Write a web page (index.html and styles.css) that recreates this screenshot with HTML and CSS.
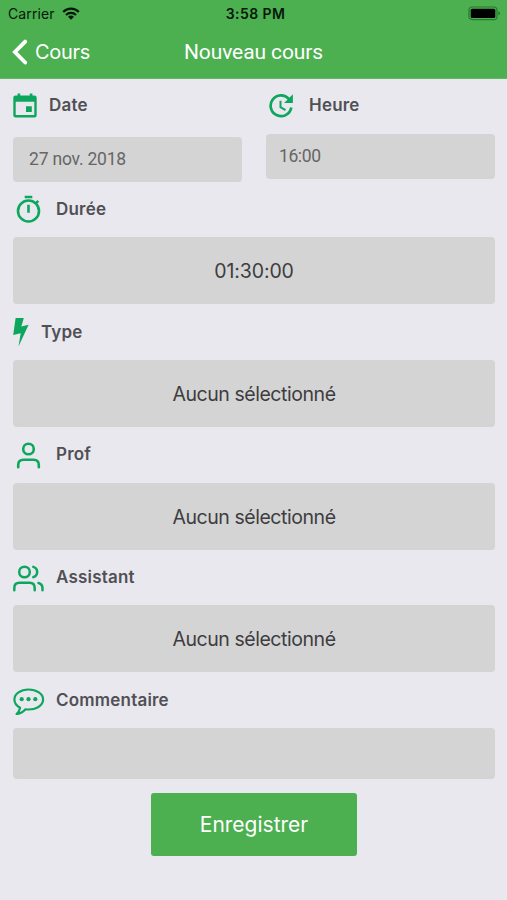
FILE: index.html
```html
<!DOCTYPE html>
<html lang="fr">
<head>
<meta charset="utf-8">
<title>Nouveau cours</title>
<link rel="stylesheet" href="styles.css">
</head>
<body>
<header class="header">
  <div class="status">
    <div class="carrier"><span>Carrier</span>
      <svg width="18" height="13" viewBox="0 0 18 13" fill="none" stroke="#06180a" stroke-width="2.2"><path d="M1.2 5C5.5.6 12.5.6 16.8 5M4 8c2.8-2.8 7.2-2.8 10 0"/><path d="M9 12.7 6 9.8c1.7-1.6 4.3-1.6 6 0z" fill="#06180a" stroke="none"/></svg>
    </div>
    <span class="time">3:58 PM</span>
    <svg class="battery" width="33" height="15" viewBox="0 0 33 15"><rect x="1" y="1" width="28" height="12.6" rx="3.2" fill="none" stroke="#267b2c" stroke-width="1.2"/><rect x="2.7" y="2.7" width="24.6" height="9.2" rx="1.5" fill="#000"/><path d="M30.4 5.3q1.6.5 1.6 2t-1.6 2z" fill="#267b2c"/></svg>
  </div>
  <nav class="nav">
    <div class="back">
      <svg width="17" height="28" viewBox="0 0 17 28" fill="none" stroke="#fff" stroke-width="3.9" stroke-linecap="round" stroke-linejoin="miter"><path d="M13.2 3.600 2.900 14l10.300 10.500"/></svg>
      <span>Cours</span>
    </div>
    <h1 class="title">Nouveau cours</h1>
    <span></span>
  </nav>
</header>
<main class="form">
  <div class="pair">
    <section class="half">
      <div class="label label-date">
        <svg width="24" height="25" viewBox="0 -0.500 24 25"><path fill="#0ca75d" fill-rule="evenodd" d="M2.600 2h2V0h2.600v2h9.600V0h2.600v2h2q2.300 0 2.300 2.300v17.400q0 2.300-2.300 2.300H2.600Q.3 24 .3 21.700V4.300Q.3 2 2.600 2M2.700 8.300v13.300h18.600V8.300zM13 12.700h5.800v5.800H13z"/></svg>
        <span>Date</span>
      </div>
      <div class="input input-date">27 nov. 2018</div>
    </section>
    <section class="half">
      <div class="label label-time">
        <svg width="26" height="26" viewBox="1 -0.500 26 26" fill="none" stroke="#0ca75d" stroke-width="2.700"><path d="M20.800 5.300A10.400 10.400 0 1 0 23.300 14"/><path d="M24.900 .8v8.800h-8.800z" fill="#0ca75d" stroke="none"/><path d="M12.500 7.200v6.400l5 3.100" stroke-width="2"/></svg>
        <span>Heure</span>
      </div>
      <div class="input input-time">16:00</div>
    </section>
  </div>

  <section class="group">
    <div class="label">
      <svg class="icon-wide" width="32" height="30" viewBox="0 0 32 30" fill="none" stroke="#0ca75d" stroke-width="2.600"><circle cx="15.500" cy="17" r="10.500"/><path d="M11.700 3h7.600M15.500 10.700v8M22.800 9.300l2.500-2.500"/></svg>
      <span>Durée</span>
    </div>
    <div class="field duration">01:30:00</div>
  </section>
  <section class="group">
    <div class="label label-type">
      <svg width="17" height="30" viewBox="0 -1 17 30"><path fill="#0ca75d" d="M2.600 0h8.200L8.300 8.500l7.300-1.800L5.500 28.500l2.200-13.200L.2 16.900z"/></svg>
      <span>Type</span>
    </div>
    <div class="field">Aucun sélectionné</div>
  </section>
  <section class="group">
    <div class="label">
      <svg class="icon-wide" width="32" height="30" viewBox="0 -1 32 30" fill="none" stroke="#0ca75d" stroke-width="2.600" stroke-linecap="round"><circle cx="15.500" cy="8" r="5.300"/><path d="M5.200 26.300V24q0-5.200 5.200-5.200h10.200q5.200 0 5.200 5.200v2.300"/></svg>
      <span>Prof</span>
    </div>
    <div class="field">Aucun sélectionné</div>
  </section>
  <section class="group">
    <div class="label">
      <svg class="icon-wide" width="32" height="30" viewBox="0 -1 32 30" fill="none" stroke="#0ca75d" stroke-width="2.500" stroke-linecap="round"><circle cx="11.500" cy="8" r="5.300"/><path d="M1.300 26.300V24q0-5.200 5.200-5.200h10q5.200 0 5.200 5.200v2.300M20.300 2.900a5.300 5.300 0 0 1 0 10.200M25.500 19q4 1.200 4 5.200v2.100"/></svg>
      <span>Assistant</span>
    </div>
    <div class="field">Aucun sélectionné</div>
  </section>
  <section class="group">
    <div class="label">
      <svg class="icon-wide" width="32" height="30" viewBox="0 -1.500 32 30"><path fill="none" stroke="#0ca75d" stroke-width="2.200" stroke-linejoin="round" d="M15.600 3C7.600 3 1.400 7.400 1.400 13c0 3.400 2.200 6.400 5.700 8.200-.5 2.600-1.700 4.700-3.500 6.400 3.800-.5 6.700-2.200 8.900-4.800 10.100 1.200 17.600-3.600 17.600-9.800C30.100 7.400 23.600 3 15.600 3z"/><g fill="#0ca75d"><circle cx="8.700" cy="12.700" r="2.100"/><circle cx="15.500" cy="12.700" r="2.100"/><circle cx="22.300" cy="12.700" r="2.100"/></g></svg>
      <span>Commentaire</span>
    </div>
    <div class="field comment"></div>
  </section>
  <button class="save" type="button">Enregistrer</button>
</main>
</body>
</html>
```
FILE: styles.css
```css
* { box-sizing: border-box; }
body {
  margin: 0;
  min-height: 900px;
  background: #e9e8ee;
  font-family: Inter, "Liberation Sans", sans-serif;
}
svg { display: block; flex: none; }
.header { height: 79px; background: #4caf50; border-bottom: 1px solid #63b568; }
.status {
  height: 27px;
  padding: 0 6px 0 8px;
  display: grid;
  grid-template-columns: 1fr auto 1fr;
  align-items: center;
  font-size: 14px;
  color: #06180a;
}
.carrier { display: flex; align-items: center; gap: 7px; letter-spacing: .1px; }
.time { font-weight: 600; letter-spacing: .4px; padding-left: 2px; }
.battery { justify-self: end; }
.nav {
  height: 50px;
  padding: 0 12px;
  display: grid;
  grid-template-columns: 1fr auto 1fr;
  align-items: center;
  color: #fff;
}
.back { display: flex; align-items: center; gap: 6px; font-size: 20px; letter-spacing: -.3px; }
.title { margin: 0; font: 400 21px Roboto, sans-serif; letter-spacing: -.1px; }
.form { padding: 0 12px 0 13px; display: flex; flex-direction: column; }
.pair { display: flex; gap: 24px; height: 102.6px; }
.half { flex: 1; }
.label {
  height: 55.7px;
  display: flex;
  align-items: center;
  gap: 12px;
  font: 600 17px Inter, sans-serif;
  letter-spacing: .2px;
  color: #505055;
}
.label span { padding-bottom: 1px; }
.label-date { height: 58px; padding-bottom: 5px; }
.label-time { height: 55px; padding: 0 0 2px 3px; gap: 14px; }
.label-type { gap: 11px; }
.icon-wide { margin-right: -1px; }
.input {
  height: 45px;
  border-radius: 4px;
  background: #d4d4d4;
  display: flex;
  align-items: center;
  padding-bottom: 1px;
  font: 400 17.5px Roboto, sans-serif;
  letter-spacing: -.2px;
  color: #666;
}
.input-date { padding-left: 16px; }
.input-time { padding-left: 13px; letter-spacing: -.4px; }
.field {
  height: 67px;
  padding-top: 1px;
  border-radius: 4px;
  background: #d4d4d4;
  display: flex;
  align-items: center;
  justify-content: center;
  font-size: 19.5px;
  letter-spacing: -.45px;
  color: #3d3d3f;
}
.duration { letter-spacing: -.1px; }
.comment { height: 51px; }
.save {
  align-self: center;
  width: 206px;
  height: 63px;
  margin-top: 14px;
  border: 0;
  border-radius: 3px;
  background: #4caf50;
  color: #fff;
  font: 400 21px Inter, sans-serif;
}
```
